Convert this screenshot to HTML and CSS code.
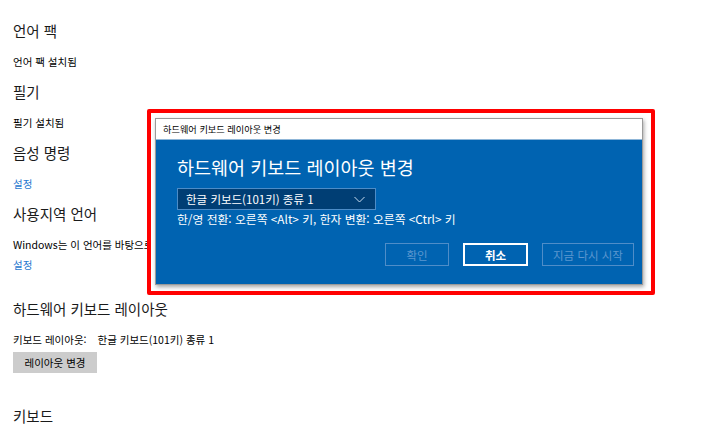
FILE: index.html
```html
<!DOCTYPE html>
<html lang="ko">
<head>
  <meta charset="UTF-8">
  <meta name="viewport" content="width=device-width, initial-scale=1.0">
  <title>언어 설정</title>
  <link rel="stylesheet" href="styles.css">
</head>
<body>
  <!-- 설정 페이지 -->
  <div class="page">
    <section class="group">
      <h2>언어 팩</h2>
      <p>언어 팩 설치됨</p>
    </section>
    <section class="group">
      <h2>필기</h2>
      <p>필기 설치됨</p>
    </section>
    <section class="group">
      <h2>음성 명령</h2>
      <a class="link" href="#">설정</a>
    </section>
    <section class="group">
      <h2>사용지역 언어</h2>
      <p>Windows는 이 언어를 바탕으로 앱과 웹 사이트에 표시할 형식을 정합니다.</p>
      <a class="link tight" href="#">설정</a>
    </section>
    <section class="group hw">
      <h2>하드웨어 키보드 레이아웃</h2>
      <p><span class="label">키보드 레이아웃:</span>한글 키보드(101키) 종류 1</p>
      <button class="grey-btn">레이아웃 변경</button>
    </section>
    <section class="group kb">
      <h2>키보드</h2>
    </section>
  </div>

  <!-- 강조 표시 + 대화상자 -->
  <div class="highlight">
    <div class="dialog">
      <div class="dialog-title">하드웨어 키보드 레이아웃 변경</div>
      <div class="dialog-body">
        <h1>하드웨어 키보드 레이아웃 변경</h1>
        <div class="select">
          <span>한글 키보드(101키) 종류 1</span>
          <svg width="11" height="7" viewBox="0 0 11 7"><path d="M0.5 1 L5.5 6 L10.5 1" fill="none" stroke="#c9dcef" stroke-width="1"/></svg>
        </div>
        <p class="hint">한/영 전환: 오른쪽 &lt;Alt&gt; 키, 한자 변환: 오른쪽 &lt;Ctrl&gt; 키</p>
        <div class="actions">
          <button class="dlg-btn off ok">확인</button>
          <button class="dlg-btn cancel">취소</button>
          <button class="dlg-btn off restart">지금 다시 시작</button>
        </div>
      </div>
    </div>
  </div>
</body>
</html>
```

FILE: styles.css
```css
/* 기본 */
* { box-sizing: border-box; }
body {
  margin: 0;
  background: #fff;
  font-family: "Noto Sans CJK KR", "Noto Sans", sans-serif;
  color: #000;
  width: 728px;
  height: 439px;
  overflow: hidden;
  position: relative;
}

/* 설정 목록 */
.page { padding: 21px 0 0 13px; }
.group { margin-bottom: 12px; }
.group h2 {
  margin: 0 0 13px;
  font-size: 14.5px;
  line-height: 20px;
  font-weight: normal;
  color: #1a1a1a;
}
.group p {
  margin: 0;
  font-size: 10.5px;
  line-height: 16px;
  white-space: nowrap;
}
.link {
  display: block;
  font-size: 10.5px;
  line-height: 16px;
  color: #1f78cf;
  text-decoration: none;
}
.link.tight { margin-top: 4px; }
.hw { margin-top: 26px; }
.hw .label { margin-right: 11px; }
.grey-btn {
  margin-top: 3px;
  width: 84px;
  height: 21px;
  border: none;
  background: #cccccc;
  font-family: inherit;
  font-size: 10.5px;
  color: #000;
  padding: 0;
}
.kb { margin-top: 33px; }

/* 빨간 강조 상자 */
.highlight {
  position: absolute;
  left: 147px;
  top: 109px;
  width: 508px;
  height: 186px;
  border: 4px solid #ff0000;
  border-radius: 2px;
  padding: 5px 8px 6px 4px;
  background: #fff;
}

/* 대화상자 */
.dialog {
  height: 100%;
  border: 1px solid #9a9a9a;
  box-shadow: 1px 2px 4px rgba(0, 0, 0, 0.35);
  display: flex;
  flex-direction: column;
}
.dialog-title {
  height: 21px;
  line-height: 21px;
  padding-left: 7px;
  font-size: 9.2px;
  color: #000;
  background: #fff;
  border-bottom: 1px solid #8fb6d8;
}
.dialog-body {
  flex: 1;
  background: #0063b1;
  color: #fff;
  padding: 15px 8px 0 21px;
}
.dialog-body h1 {
  margin: 0 0 9px;
  font-size: 18.5px;
  line-height: 24px;
  font-weight: normal;
}
.select {
  width: 199px;
  height: 22px;
  background: #003e74;
  border: 1px solid #4d8cc7;
  display: flex;
  align-items: center;
  justify-content: space-between;
  padding: 0 10px 0 8px;
  font-size: 11.5px;
}
.hint {
  margin: 1px 0 0;
  font-size: 11.8px;
  line-height: 16px;
  white-space: nowrap;
}
.actions {
  display: flex;
  justify-content: flex-end;
  gap: 14px;
  margin-top: 16px;
}
.dlg-btn {
  height: 23px;
  background: transparent;
  border: 1px solid #4f8dc8;
  color: #5d97cf;
  font-family: inherit;
  font-size: 11.5px;
  padding: 0;
}
.dlg-btn.ok { width: 64px; }
.dlg-btn.cancel {
  width: 65px;
  border: 2px solid #fff;
  color: #fff;
  font-weight: 600;
}
.dlg-btn.restart { width: 92px; }
```
